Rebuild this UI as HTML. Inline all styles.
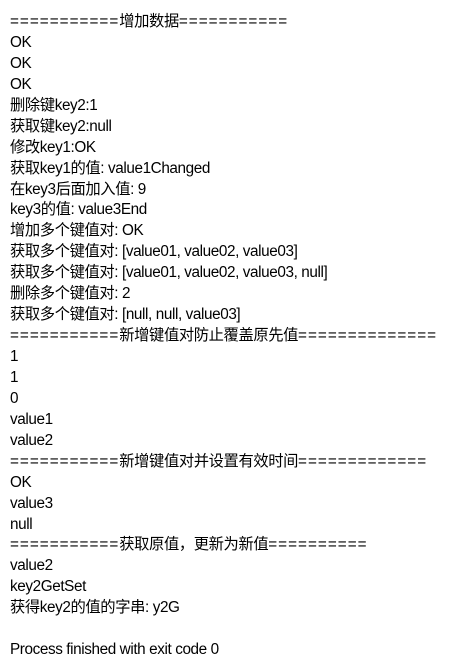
<!DOCTYPE html>
<html><head><meta charset="utf-8"><style>
html,body{margin:0;padding:0;background:#fff;width:451px;height:668px;overflow:hidden}
pre{margin:0;position:absolute;left:10px;top:12px;font-family:"Liberation Sans","Noto Sans CJK SC",sans-serif;font-size:15.3px;line-height:20.93px;color:#000;white-space:pre;letter-spacing:-0.4px}
.e{letter-spacing:1px}
</style></head><body><pre><span class="e">===========</span>增加数据<span class="e">===========</span>
OK
OK
OK
删除键key2:1
获取键key2:null
修改key1:OK
获取key1的值: value1Changed
在key3后面加入值: 9
key3的值: value3End
增加多个键值对: OK
获取多个键值对: [value01, value02, value03]
获取多个键值对: [value01, value02, value03, null]
删除多个键值对: 2
获取多个键值对: [null, null, value03]
<span class="e">===========</span>新增键值对防止覆盖原先值<span class="e">==============</span>
1
1
0
value1
value2
<span class="e">===========</span>新增键值对并设置有效时间<span class="e">=============</span>
OK
value3
null
<span class="e">===========</span>获取原值，更新为新值<span class="e">==========</span>
value2
key2GetSet
获得key2的值的字串: y2G

Process finished with exit code 0</pre></body></html>
